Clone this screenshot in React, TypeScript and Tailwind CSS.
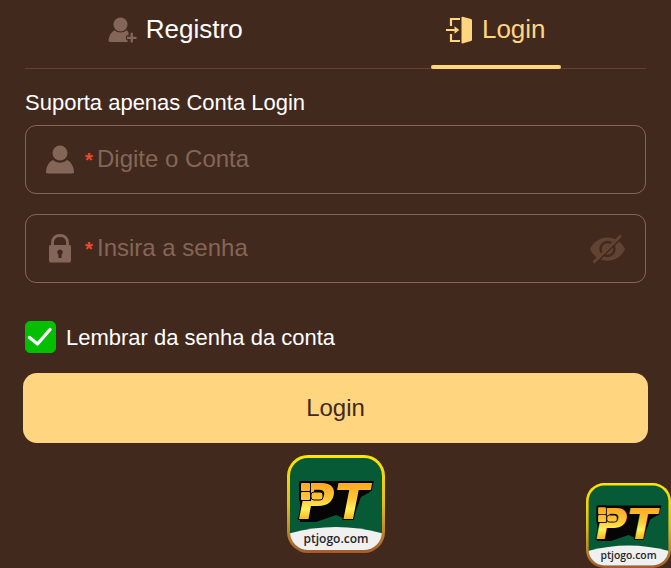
import { useState } from 'react';

function UserPlusIcon() {
  return (
    <svg className="h-[26px] w-[29px]" viewBox="0 0 29 26" fill="#846658" aria-hidden="true">
      <circle cx="12.5" cy="7.5" r="7" />
      <path d="M6.5 13.2c3.5 3 8.500 3 12 0 1 .7 1.500 1.300 2 2.200v3h-2.500v4.300h1.500V25H2.500C1 25 .3 24.300.5 23c.5-4.300 2.500-8 6-9.800z" />
      <path d="M22.600 15.700h2.300v4h3.600V22h-3.600v3.600h-2.300V22H19v-2.300h3.600z" />
    </svg>
  );
}

function EnterIcon() {
  return (
    <svg className="h-[28px] w-[27px]" viewBox="0 0 27 28" aria-hidden="true">
      <path d="M14 3H5v7M5 18v7h9M0 14h11" fill="none" stroke="#ffd580" strokeWidth="2.200" />
      <path d="M8.500 10.300 13.300 14l-4.800 3.700z" fill="#ffd580" />
      <path d="M16.500.7 25 3q1 .3 1 1.300v19.400q0 1-1 1.300l-8.500 2.500q-1 .2-1-.9V1.600q0-1.100 1-.9z" fill="#ffd580" />
    </svg>
  );
}

function UserIcon() {
  return (
    <svg className="h-[29px] w-[28px] shrink-0" viewBox="0 0 28 29" fill="#846658" aria-hidden="true">
      <circle cx="14" cy="8" r="7.500" />
      <path d="M7 15c4 3.500 10 3.500 14 0 4 2 6.500 6 7 11.500.1 1.500-.5 2-1.500 2h-25c-1 0-1.600-.5-1.500-2C.5 21 3 17 7 15z" />
    </svg>
  );
}

function LockIcon() {
  return (
    <svg className="h-[29px] w-[28px] shrink-0" viewBox="0 0 28 29" aria-hidden="true">
      <path d="M6.500 12V8.500C6.500 4 9.500 1.500 14 1.500s7.500 2.500 7.500 7V12" fill="none" stroke="#846658" strokeWidth="2.800" />
      <path
        fillRule="evenodd"
        fill="#846658"
        d="M4.500 11h19q1.500 0 1.500 1.500v14q0 2-1.500 2h-19Q3 28.500 3 26.500v-14Q3 11 4.500 11zM14 15.500a2.700 2.700 0 0 0-1.600 4.900V24h3.200v-3.600A2.700 2.700 0 0 0 14 15.500z"
      />
    </svg>
  );
}

function EyeOffIcon() {
  return (
    <svg className="h-[30px] w-[35px]" viewBox="0 0 35 30" aria-hidden="true">
      <path d="M0 15C7-.5 28-.5 35 15 28 30.500 7 30.500 0 15z" fill="#604331" />
      <circle cx="17.500" cy="15" r="7" fill="none" stroke="#42291d" strokeWidth="2.400" />
      <path d="M5.500 29.500 32.500 3" stroke="#42291d" strokeWidth="1.600" />
      <path d="M3.500 28.500 31 1.500" stroke="#604331" strokeWidth="3" />
    </svg>
  );
}

function BrandLogo({ id, className }: { id: string; className: string }) {
  return (
    <svg className={className} viewBox="0 0 98 98" role="img" aria-label="PT ptjogo.com">
      <defs>
        <linearGradient id={`${id}-rim`} x1="0" y1="0" x2="0" y2="1">
          <stop offset="0" stopColor="#ffe600" />
          <stop offset="0.500" stopColor="#e2bd1c" />
          <stop offset="1" stopColor="#a8592c" />
        </linearGradient>
        <linearGradient id={`${id}-gold`} gradientUnits="userSpaceOnUse" x1="0" y1="27" x2="0" y2="65">
          <stop offset="0" stopColor="#ffa51f" />
          <stop offset="0.450" stopColor="#ffc83a" />
          <stop offset="0.700" stopColor="#fff05a" />
          <stop offset="1" stopColor="#f7b51c" />
        </linearGradient>
        <clipPath id={`${id}-face`}>
          <rect x="3" y="3" width="92" height="92" rx="18" />
        </clipPath>
      </defs>
      <rect width="98" height="98" rx="21" fill={`url(#${id}-rim)`} />
      <g clipPath={`url(#${id}-face)`}>
        <rect width="98" height="98" fill="#075a36" />
        <path d="M0 79Q49 65 98 79V98H0z" fill="#f0f0f0" />
      </g>
      <path d="M13 26H87L83 37 74 42 67 61 56 63 49 60 29 67H13z" fill="#050505" />
      <text
        x="11"
        y="64"
        fill={`url(#${id}-gold)`}
        stroke="#050505"
        strokeWidth="2"
        paintOrder="stroke"
        fontSize="50"
        fontWeight="700"
        style={{ fontFamily: '"DejaVu Sans", sans-serif', fontStyle: 'oblique' }}
      >
        PT
      </text>
      <path d="M12 26H24V46H12z" fill="#050505" />
      <g fill={`url(#${id}-gold)`}>
        <rect x="14" y="28" width="9" height="8" rx="1" />
        <rect x="14" y="37" width="9" height="8" rx="1" />
      </g>
      <rect x="24" y="37" width="12" height="8" rx="3" fill={`url(#${id}-gold)`} stroke="#050505" />
      <text
        x="49"
        y="88"
        textAnchor="middle"
        fill="#252525"
        fontSize="12"
        fontWeight="600"
        style={{ fontFamily: '"Open Sans", sans-serif' }}
      >
        ptjogo.com
      </text>
    </svg>
  );
}

const fieldClass =
  'mb-5 flex h-[69px] items-center rounded-[11px] border border-[#846658] px-5 text-2xl';
const inputClass =
  'min-w-0 flex-1 bg-transparent pb-[2px] text-white outline-none placeholder:text-[#846658] placeholder:opacity-100';
const requiredClass = 'ml-[11px] w-3 shrink-0 text-xl font-bold text-[#ee4932]';

export default function App() {
  const [visible, setVisible] = useState(false);
  const [remember, setRemember] = useState(true);

  return (
    <main className="relative min-h-screen overflow-hidden bg-[#42291d] px-[25px] font-['Liberation_Sans',Arial,sans-serif] text-white">
      <nav className="-mx-[10px] flex h-[68px] items-start text-[26px]">
        <button type="button" className="flex flex-1 justify-center">
          <span className="flex h-[59px] items-center gap-[9px]">
            <UserPlusIcon />
            Registro
          </span>
        </button>
        <button type="button" className="flex flex-1 flex-col items-center text-[#ffd580]">
          <span className="flex h-[59px] items-center gap-[9px]">
            <EnterIcon />
            Login
          </span>
          <span className="z-10 mt-[6px] h-1 w-[130px] shrink-0 rounded-full bg-[#ffd580]" />
        </button>
      </nav>
      <div className="border-t border-[#604331]" />

      <form onSubmit={(e) => e.preventDefault()}>
        <h1 className="mt-5 mb-2 text-[22px] leading-7">Suporta apenas Conta Login</h1>

        <label className={fieldClass}>
          <UserIcon />
          <span className={requiredClass}>*</span>
          <input className={inputClass} type="text" aria-label="Conta" placeholder="Digite o Conta" />
        </label>

        <div className={fieldClass}>
          <label htmlFor="senha" className="flex items-center">
            <LockIcon />
            <span className={requiredClass}>*</span>
          </label>
          <input
            id="senha"
            className={inputClass}
            type={visible ? 'text' : 'password'}
            aria-label="Senha"
            placeholder="Insira a senha"
          />
          <button type="button" aria-label="Mostrar senha" onClick={() => setVisible(!visible)}>
            <EyeOffIcon />
          </button>
        </div>

        <label className="mt-[38px] flex h-8 w-fit items-center gap-[10px] text-[22px]">
          <span className="grid">
            <input
              type="checkbox"
              checked={remember}
              onChange={(e) => setRemember(e.target.checked)}
              className="peer col-start-1 row-start-1 h-8 w-[31px] appearance-none rounded-[5px] border border-[#04be02] checked:bg-[#04be02]"
            />
            <svg
              className="pointer-events-none invisible col-start-1 row-start-1 h-8 w-[31px] peer-checked:visible"
              viewBox="0 0 31 32"
              aria-hidden="true"
            >
              <path d="m4.500 16.500 8 6.500L25 8.500" fill="none" stroke="#fff" strokeWidth="3.400" strokeLinecap="round" strokeLinejoin="round" />
            </svg>
          </span>
          Lembrar da senha da conta
        </label>

        <div className="-mx-[2px] mt-5">
          <button type="submit" className="h-[70px] w-full rounded-[14px] bg-[#ffd580] text-2xl text-[#42291d]">
            Login
          </button>
        </div>
      </form>

      <div className="mt-3 flex justify-center">
        <BrandLogo id="main" className="size-[98px]" />
      </div>
      <div className="absolute right-0 bottom-0">
        <BrandLogo id="float" className="size-[85px]" />
      </div>
    </main>
  );
}
